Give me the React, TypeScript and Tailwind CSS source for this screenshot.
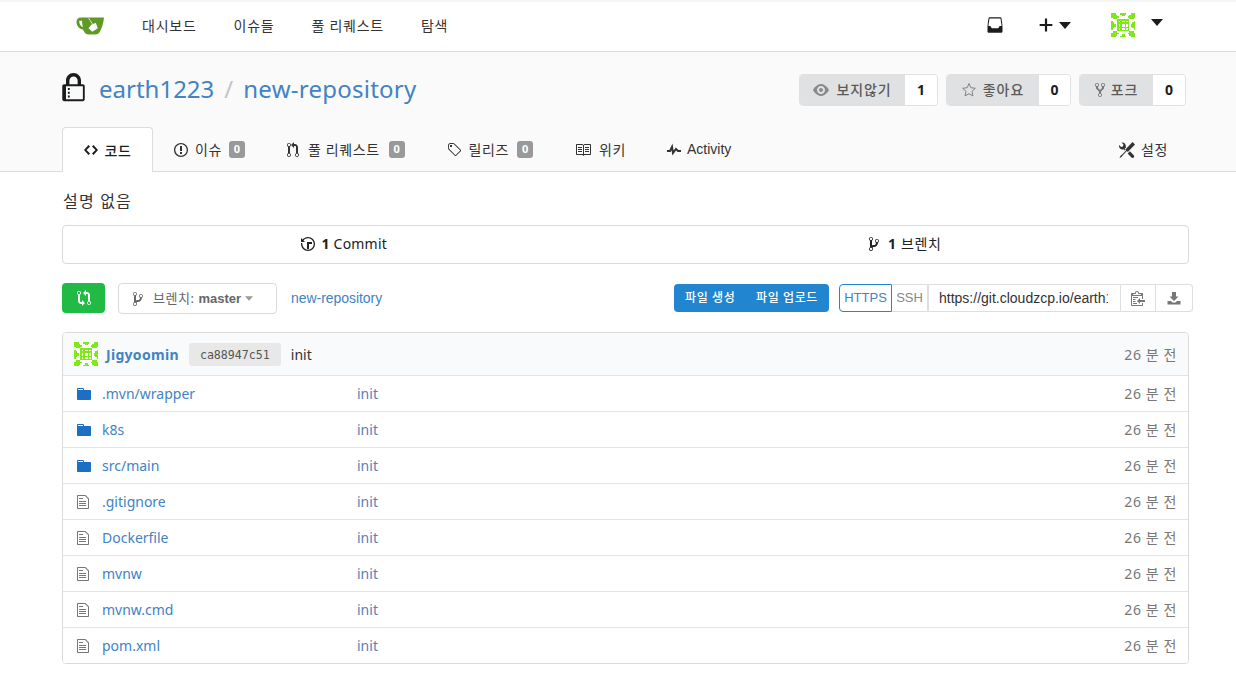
import type { ReactNode } from "react";

const KO = "font-['Noto_Sans','Noto_Sans_CJK_KR',sans-serif]";

function Oct({ w, d, className = "" }: { w: number; d: string; className?: string }) {
  return (
    <svg viewBox={`0 0 ${w} 16`} width={w} height={16} fill="currentColor" className={`shrink-0 ${className}`}>
      <path fillRule="evenodd" d={d} />
    </svg>
  );
}

const icons = {
  lock: "M4 13H3v-1h1v1zm8-6v7c0 .55-.45 1-1 1H1c-.55 0-1-.45-1-1V7c0-.55.45-1 1-1h1V4c0-2.2 1.8-4 4-4s4 1.8 4 4v2h1c.55 0 1 .45 1 1zM3.8 6h4.41V4c0-1.22-.98-2.2-2.2-2.2-1.22 0-2.2.98-2.2 2.2v2H3.8zM11 7H2v7h9V7zM4 8H3v1h1V8zm0 2H3v1h1v-1z",
  inbox: "M14 9l-1.13-7.14c-.08-.48-.5-.86-1-.86H2.13c-.5 0-.92.38-1 .86L0 9v5c0 .55.45 1 1 1h12c.55 0 1-.45 1-1V9zm-3.28.55l-.44.89c-.17.34-.52.56-.91.56H4.61c-.38 0-.72-.22-.89-.55l-.44-.91c-.17-.33-.52-.55-.89-.55H1l1-7h10l1 7h-1.38c-.39 0-.73.22-.91.55l.01.01z",
  eye: "M8.06 2C3 2 0 8 0 8s3 6 8.06 6C13 14 16 8 16 8s-3-6-7.94-6zM8 12c-2.2 0-4-1.78-4-4 0-2.2 1.8-4 4-4 2.22 0 4 1.8 4 4 0 2.22-1.78 4-4 4zm2-4c0 1.11-.89 2-2 2-1.11 0-2-.89-2-2 0-1.11.89-2 2-2 1.11 0 2 .89 2 2z",
  fork: "M8 1a1.993 1.993 0 0 0-1 3.72V6L5 8 3 6V4.72A1.993 1.993 0 0 0 2 1a1.993 1.993 0 0 0-1 3.72V6.5l3 3v1.78A1.993 1.993 0 0 0 5 15a1.993 1.993 0 0 0 1-3.72V9.5l3-3V4.72A1.993 1.993 0 0 0 8 1zM2 4.2C1.34 4.2.8 3.65.8 3c0-.65.55-1.2 1.2-1.2.65 0 1.2.55 1.2 1.2 0 .65-.55 1.2-1.2 1.2zm3 10c-.66 0-1.2-.55-1.2-1.2 0-.65.55-1.2 1.2-1.2.65 0 1.2.55 1.2 1.2 0 .65-.55 1.2-1.2 1.2zm3-10c-.66 0-1.2-.55-1.2-1.2 0-.65.55-1.2 1.2-1.2.65 0 1.2.55 1.2 1.2 0 .65-.55 1.2-1.2 1.2z",
  code: "M9.5 3L8 4.5 11.5 8 8 11.5 9.5 13 14 8 9.5 3zm-5 0L0 8l4.5 5L6 11.5 2.5 8 6 4.5 4.5 3z",
  issue: "M7 2.3c3.14 0 5.7 2.56 5.7 5.7s-2.56 5.7-5.7 5.7A5.71 5.71 0 0 1 1.3 8c0-3.14 2.56-5.7 5.7-5.7zM7 1C3.14 1 0 4.14 0 8s3.14 7 7 7 7-3.14 7-7-3.14-7-7-7zm1 3H6v5h2V4zm0 6H6v2h2v-2z",
  pr: "M11 11.28V5c-.03-.78-.34-1.47-.94-2.06C9.46 2.35 8.78 2.03 8 2H7V0L4 3l3 3V4h1c.27.02.48.11.69.31.21.2.3.42.31.69v6.28A1.993 1.993 0 0 0 10 15a1.993 1.993 0 0 0 1-3.72zm-1 2.92c-.66 0-1.2-.55-1.2-1.2 0-.65.55-1.2 1.2-1.2.65 0 1.2.55 1.2 1.2 0 .65-.55 1.2-1.2 1.2zM4 3c0-1.11-.89-2-2-2a1.993 1.993 0 0 0-1 3.72v6.56A1.993 1.993 0 0 0 2 15a1.993 1.993 0 0 0 1-3.72V4.72c.59-.34 1-.98 1-1.72zm-.8 10c0 .66-.55 1.2-1.2 1.2-.65 0-1.2-.55-1.2-1.2 0-.65.55-1.2 1.2-1.2.65 0 1.2.55 1.2 1.2zM2 4.2C1.34 4.2.8 3.65.8 3c0-.65.55-1.2 1.2-1.2.65 0 1.2.55 1.2 1.2 0 .65-.55 1.2-1.2 1.2z",
  tag: "M7.73 1.73C7.26 1.26 6.62 1 5.96 1H3.5C2.13 1 1 2.13 1 3.5v2.47c0 .66.27 1.3.73 1.77l6.06 6.06c.39.39 1.02.39 1.41 0l4.59-4.59a.996.996 0 0 0 0-1.41L7.73 1.73zM2.38 7.09c-.31-.3-.47-.7-.47-1.13V3.5c0-.88.72-1.59 1.59-1.59h2.47c.42 0 .83.16 1.13.47l6.14 6.13-4.73 4.73-6.13-6.15zM3.01 3h2v2H3V3h.01z",
  book: "M3 5h4v1H3V5zm0 3h4V7H3v1zm0 2h4V9H3v1zm11-5h-4v1h4V5zm0 2h-4v1h4V7zm0 2h-4v1h4V9zm2-6v9c0 .55-.45 1-1 1H9.5l-1 1-1-1H2c-.55 0-1-.45-1-1V3c0-.55.45-1 1-1h5.5l1 1 1-1H15c.55 0 1 .45 1 1zm-8 .5L7.5 3H2v9h6V3.5zm7-.5H9.5l-.5.5V12h6V3z",
  pulse: "M11.5 8L8.8 5.4 6.6 8.5 5.5 1.6 2.38 8H0v2h3.6l.9-1.8.9 5.4L9 8.5l1.6 1.5H14V8h-2.5z",
  tools: "M4.48 7.27c.26.26 1.28 1.33 1.28 1.33l.56-.58-.88-.91 1.69-1.8s-.76-.74-.43-.45c.32-1.19.03-2.51-.87-3.44C4.93.5 3.66.2 2.52.51l1.93 2-.51 1.96-1.89.52-1.93-2C-.19 4.17.1 5.48 1 6.4c.94.98 2.29 1.26 3.48.87zm6.44 1.94l-2.33 2.3 3.84 3.98c.31.33.73.49 1.14.49.41 0 .82-.16 1.14-.49.63-.65.63-1.7 0-2.35l-3.79-3.93zM16 2.53L13.55 0 6.33 7.46l.88.91-4.31 4.46-.99.53-1.39 2.27.35.37 2.2-1.44.51-1.02L7.9 9.08l.88.91L16 2.53z",
  history: "M8 13H6V6h5v2H8v5zM7 1C4.81 1 2.87 2.02 1.59 3.59L0 2v4h4L2.5 4.5C3.55 3.17 5.17 2.3 7 2.3c3.14 0 5.7 2.56 5.7 5.7s-2.56 5.7-5.7 5.7A5.71 5.71 0 0 1 1.3 8c0-.34.03-.67.09-1H.08C.03 7.33 0 7.66 0 8c0 3.86 3.14 7 7 7s7-3.14 7-7-3.14-7-7-7z",
  branch: "M10 5c0-1.11-.89-2-2-2a1.993 1.993 0 0 0-1 3.72v.3c-.02.52-.23.98-.63 1.38-.4.4-.86.61-1.38.63-.83.02-1.48.16-2 .45V4.72a1.993 1.993 0 0 0-1-3.72C.88 1 0 1.89 0 3a2 2 0 0 0 1 1.72v6.56c-.59.35-1 .99-1 1.72 0 1.11.89 2 2 2 1.11 0 2-.89 2-2 0-.53-.2-1-.53-1.36.09-.06.48-.41.59-.47.25-.11.56-.17.94-.17 1.05-.05 1.95-.45 2.75-1.25S8.95 7.77 9 6.73h-.02C9.59 6.37 10 5.73 10 5zM2 1.8c.66 0 1.2.55 1.2 1.2 0 .65-.55 1.2-1.2 1.2C1.35 4.2.8 3.65.8 3c0-.65.55-1.2 1.2-1.2zm0 12.41c-.66 0-1.2-.55-1.2-1.2 0-.65.55-1.2 1.2-1.2.65 0 1.2.55 1.2 1.2 0 .65-.55 1.2-1.2 1.2zm6-8c-.66 0-1.2-.55-1.2-1.2 0-.65.55-1.2 1.2-1.2.65 0 1.2.55 1.2 1.2 0 .65-.55 1.2-1.2 1.2z",
  dir: "M13 4H7V3c0-.66-.31-1-1-1H1c-.55 0-1 .45-1 1v10c0 .55.45 1 1 1h12c.55 0 1-.45 1-1V5c0-.55-.45-1-1-1zM6 4H1V3h5v1z",
  file: "M6 5H2V4h4v1zM2 8h7V7H2v1zm0 2h7V9H2v1zm0 2h7v-1H2v1zm10-7.5V14c0 .55-.45 1-1 1H1c-.55 0-1-.45-1-1V2c0-.55.45-1 1-1h7.5L12 4.5zM11 5L8 2H1v12h10V5z",
  clippy: "M2 13h4v1H2v-1zm5-6H2v1h5V7zm2 3V8l-3 3 3 3v-2h5v-2H9zM4.5 9H2v1h2.5V9zM2 12h2.5v-1H2v1zm9 1h1v2c-.02.28-.11.52-.3.7-.19.18-.42.28-.7.3H1c-.55 0-1-.45-1-1V4c0-.55.45-1 1-1h3c0-1.11.89-2 2-2 1.11 0 2 .89 2 2h3c.55 0 1 .45 1 1v5h-1V6H1v9h10v-2zM2 5h8c0-.55-.45-1-1-1H8c-.55 0-1-.45-1-1s-.45-1-1-1-1 .45-1 1-.45 1-1 1H3c-.55 0-1 .45-1 1z",
  compare: "M5 12H4c-.27-.02-.48-.11-.69-.31-.21-.2-.3-.42-.31-.69V4.72A1.993 1.993 0 0 0 2 1a1.993 1.993 0 0 0-1 3.72V11c.03.78.34 1.47.94 2.06.6.59 1.28.91 2.06.94h1v2l3-3-3-3v2zM2 1.8c.66 0 1.2.55 1.2 1.2 0 .65-.55 1.2-1.2 1.2C1.34 4.2.8 3.65.8 3c0-.65.55-1.2 1.2-1.2zm11 9.48V5c-.03-.78-.34-1.47-.94-2.06-.6-.59-1.28-.91-2.06-.94H9V0L6 3l3 3V4h1c.27.02.48.11.69.31.21.2.3.42.31.69v6.28A1.993 1.993 0 0 0 12 15a1.993 1.993 0 0 0 1-3.72zm-1 2.92c-.66 0-1.2-.55-1.2-1.2 0-.65.55-1.2 1.2-1.2.65 0 1.2.55 1.2 1.2 0 .65-.55 1.2-1.2 1.2z",
  plus: "M12 9H7v5H5V9H0V7h5V2h2v5h5v2z",
};

function Caret({ className = "" }: { className?: string }) {
  return (
    <svg viewBox="0 0 12 7" className={className} fill="currentColor">
      <path d="M0 0h12L6 7z" />
    </svg>
  );
}

function Logo() {
  return (
    <svg viewBox="0 0 28 18" width={28} height={18} className="mt-[2px] shrink-0">
      <path fill="#609926" d="M5 .5H28C27.500 6 26 11 24 14.500 23 16.500 21.500 17.500 19.500 17.500H13C10 17.500 8 15.500 7 12.500 3.500 12 .5 9 .5 5 .5 2 2 .5 5 .5z" />
      <path fill="#fff" d="M3.300 3.800H6C6 6 6.300 8 7 10 4.600 9.500 3 7 3.300 3.800z" />
      <path fill="none" stroke="#fff" strokeWidth={0.7} d="M12.500 1l4 6" />
      <path fill="#fff" d="M15.500 7.500L19.800 6l2 5.200-5.500 3.600-3.800-3.600z" />
    </svg>
  );
}

// identicon-style avatar, mirrored on both axes
function Avatar({ size }: { size: number }) {
  const rows = [
    "11100011",
    "11110001",
    "11111000",
    "01110000",
    "00001111",
    "10001010",
    "11001111",
    "11101010",
  ];
  const rects: ReactNode[] = [];
  rows.forEach((row, y) =>
    row.split("").forEach((c, x) => {
      if (c !== "1") return;
      [
        [x, y],
        [15 - x, y],
        [x, 15 - y],
        [15 - x, 15 - y],
      ].forEach(([rx, ry]) => rects.push(<rect key={`${rx}-${ry}`} x={rx} y={ry} width={1.02} height={1.02} />));
    })
  );
  return (
    <svg viewBox="0 0 16 16" width={size} height={size} fill="#7fe817" shapeRendering="crispEdges" className="shrink-0 bg-white">
      {rects}
    </svg>
  );
}

function CountButton({ icon, label, count, labelWidth, countWidth, gap }: { icon?: ReactNode; label: string; count: number; labelWidth: string; countWidth: string; gap: string }) {
  return (
    <div className="flex h-8 rounded-[4px] border border-[#e0e1e2] text-[14px]">
      <div className={`flex items-center justify-center rounded-l-[3px] bg-[#e0e1e2] font-medium tracking-[0.9px] text-[#5a5a5a] ${labelWidth} ${gap}`}>
        {icon}
        <span className="-mt-px">{label}</span>
      </div>
      <div className={`flex items-center justify-center rounded-r-[3px] bg-white font-bold tracking-normal text-[#1b1c1d] ${countWidth}`}>{count}</div>
    </div>
  );
}

function Tab({ icon, label, count, className = "" }: { icon: ReactNode; label: string; count?: number; className?: string }) {
  return (
    <div className={`flex items-center text-[14px] text-[#333] ${className}`}>
      {icon}
      <span>{label}</span>
      {count !== undefined && (
        <span className="flex h-[17px] w-4 items-center justify-center rounded-[3px] bg-[#999] text-[11px] font-bold tracking-normal text-white">{count}</span>
      )}
    </div>
  );
}

const files = [
  { name: ".mvn/wrapper", dir: true },
  { name: "k8s", dir: true },
  { name: "src/main", dir: true },
  { name: ".gitignore" },
  { name: "Dockerfile" },
  { name: "mvnw" },
  { name: "mvnw.cmd" },
  { name: "pom.xml" },
];

export default function App() {
  return (
    <div className={`h-[680px] w-[1236px] overflow-hidden bg-white text-[14px] text-[#212121] ${KO}`}>
      {/* Top nav */}
      <div className="h-[52px] border-t-2 border-b border-t-[#f5f5f5] border-b-[#dcdcdc] bg-white">
        <div className="flex h-[46px] items-center pl-[76px] pr-[73px]">
          <Logo />
          <div className="ml-[38px] flex gap-[37px] text-[14px] tracking-[0.75px] text-[#333]">
            <span>대시보드</span>
            <span>이슈들</span>
            <span>풀 리퀘스트</span>
            <span>탐색</span>
          </div>
          <div className="ml-auto flex items-center text-[#1b1c1d]">
            <Oct w={14} d={icons.inbox} className="scale-110" />
            <Oct w={12} d={icons.plus} className="ml-[38px] scale-110" />
            <Caret className="ml-[7px] h-[7px] w-3" />
            <div className="ml-[40px]">
              <Avatar size={24} />
            </div>
            <Caret className="mb-[6px] ml-[16px] h-[7px] w-3" />
          </div>
        </div>
      </div>

      {/* Repo header */}
      <div className="h-[120px] border-b border-[#dcdcdc] bg-[#fafafa]">
        <div className="flex h-[75px] items-center pl-[62px] pr-[50px]">
          <svg viewBox="0 0 12 16" width={23} height={30} fill="#1b1c1d" className="mb-[3px] shrink-0">
            <path fillRule="evenodd" d={icons.lock} />
          </svg>
          <div className="ml-[14px] flex -translate-y-px items-center text-[24px] text-[#4183c4]">
            <span>earth1223</span>
            <span className="mx-[10px] text-[#c2c4c7]">/</span>
            <span className="tracking-[0.25px]">new-repository</span>
          </div>
          <div className="ml-auto flex gap-2">
            <CountButton
              icon={<Oct w={16} d={icons.eye} className="text-[#8a8a8a]" />}
              label="보지않기"
              count={1}
              labelWidth="w-[105px]"
              countWidth="w-[32px]"
              gap="gap-[7px]"
            />
            <CountButton
              icon={
                <svg viewBox="0 0 14 16" width={14} height={16} fill="none" stroke="#777" strokeWidth={0.9}>
                  <path d="M13.300 6.300l-4.500-.6L7 1.500 5.200 5.700l-4.500.6L4 9.400l-.9 4.500L7 11.700l3.900 2.200-.9-4.500z" />
                </svg>
              }
              label="좋아요"
              count={0}
              labelWidth="w-[92px]"
              countWidth="w-[31px]"
              gap="gap-[7px]"
            />
            <CountButton
              icon={<Oct w={10} d={icons.fork} className="text-[#777]" />}
              label="포크"
              count={0}
              labelWidth="w-[73px]"
              countWidth="w-[32px]"
              gap="gap-[6px]"
            />
          </div>
        </div>
        <div className="flex h-[44px] items-start pl-[62px] pr-[68px] tracking-[0.6px]">
          <div className="z-10 flex h-[45px] w-[91px] items-center justify-center gap-[7px] rounded-t-[4px] border border-b-0 border-[#dcdcdc] bg-white text-[14px] font-medium text-[#1b1c1d]">
            <Oct w={14} d={icons.code} />
            <span>코드</span>
          </div>
          <div className="flex h-[45px] items-center">
            <Tab className="ml-[21px] gap-[7px]" icon={<Oct w={14} d={icons.issue} />} label="이슈" count={0} />
            <Tab className="ml-[42px] gap-[9px]" icon={<Oct w={12} d={icons.pr} />} label="풀 리퀘스트" count={0} />
            <Tab className="ml-[42px] gap-[8px]" icon={<Oct w={14} d={icons.tag} />} label="릴리즈" count={0} />
            <Tab className="ml-[42px] gap-[8px]" icon={<Oct w={16} d={icons.book} />} label="위키" />
            <Tab className="ml-[41px] gap-[6px] font-['Liberation_Sans',sans-serif] tracking-normal" icon={<Oct w={14} d={icons.pulse} />} label="Activity" />
          </div>
          <div className="ml-auto flex h-[45px] items-center">
            <Tab className="gap-[6px]" icon={<Oct w={16} d={icons.tools} />} label="설정" />
          </div>
        </div>
      </div>

      {/* Content */}
      <div className="pl-[62px] pr-[43px]">
        <div className="mt-[17px] h-[24px] pl-px text-[16px] leading-[24px] tracking-[1.2px] text-[#333]">설명 없음</div>

        <div className="mt-[12px] flex h-[39px] w-[1127px] items-center rounded-[4px] border border-[#d9dadb] bg-white pb-[2px]">
          <div className="flex flex-1 items-center justify-center gap-[7px] text-[14px] tracking-[0.2px] text-[#212121]">
            <Oct w={14} d={icons.history} />
            <span>
              <b>1</b> Commit
            </span>
          </div>
          <div className="flex flex-1 items-center justify-center gap-[9px] pr-[2px] text-[14px] tracking-[0.6px] text-[#212121]">
            <Oct w={10} d={icons.branch} />
            <span>
              <b>1</b> 브렌치
            </span>
          </div>
        </div>

        {/* Toolbar */}
        <div className="mt-[19px] flex h-[31px] items-start">
          <div className="flex h-[30px] w-[43px] items-center justify-center rounded-[4px] bg-[#21ba45] text-white">
            <Oct w={14} d={icons.compare} />
          </div>
          <div className="ml-[13px] flex h-[31px] w-[159px] items-center rounded-[4px] border border-[#d9dadb] bg-white pl-[14px] text-[13px] text-[#666]">
            <Oct w={10} d={icons.branch} />
            <span className="ml-[10px] tracking-[0.5px]">브렌치:</span>
            <b className="ml-1 font-['Liberation_Sans',sans-serif] font-bold">master</b>
            <Caret className="ml-[4px] h-[5px] w-[8px] text-[#999]" />
          </div>
          <span className="ml-[14px] mt-[5px] font-['Liberation_Sans',sans-serif] text-[14px] -tracking-[0.05px] text-[#4183c4]">new-repository</span>

          <div className="ml-auto mt-px flex h-[28px] w-[155px] items-center justify-between rounded-[4px] bg-[#2185d0] px-[11px] text-[12px] font-medium tracking-[0.6px] text-white">
            <span>파일 생성</span>
            <span>파일 업로드</span>
          </div>
          <div className="ml-[10px] mt-px flex h-[28px] items-stretch text-[13px]">
            <div className="flex w-[53px] items-center justify-center rounded-l-[4px] border border-[#2185d0] bg-white font-['Liberation_Sans',sans-serif] text-[#4183c4]">HTTPS</div>
            <div className="flex w-[36px] items-center justify-center border-y border-r border-[#dedede] bg-white font-['Liberation_Sans',sans-serif] text-[#888]">SSH</div>
            <input
              readOnly
              value="https://git.cloudzcp.io/earth1223/new-repository.git"
              className="w-[192px] border-y border-l border-[#dedede] bg-white pl-[10px] pr-[12px] font-['Liberation_Sans',sans-serif] text-[14px] text-[#333] outline-none"
            />
            <div className="flex w-[36px] items-center justify-center border border-[#dedede] bg-white text-[#777]">
              <Oct w={14} d={icons.clippy} />
            </div>
            <div className="flex w-[37px] items-center justify-center rounded-r-[4px] border-y border-r border-[#dedede] bg-white text-[#777]">
              <svg viewBox="0 0 14 14" width={14} height={14} fill="currentColor">
                <path d="M5 1h4v4.500h2.500L7 10 2.500 5.500H5zM0.500 10h3.500l1.500 1.500h3L10 10h3.500v3.500H.5z" />
              </svg>
            </div>
          </div>
        </div>

        {/* File table */}
        <div className="mt-[18px] w-[1127px] overflow-hidden rounded-[4px] border border-[#d9dadb]">
          <div className="flex h-[42px] items-center bg-[#f9fafb] pl-[11px] pr-[11px]">
            <Avatar size={24} />
            <span className="ml-[8px] text-[14px] font-bold tracking-[0.3px] text-[#4183c4]">Jigyoomin</span>
            <span className="ml-[10px] flex h-[23px] w-[92px] items-center justify-center rounded-[3px] bg-[#e8e8e8] pt-[3px] font-['DejaVu_Sans_Mono',monospace] text-[11.6px] text-[#555]">ca88947c51</span>
            <span className="ml-[10px] text-[14px] text-[#333]">init</span>
            <span className="ml-auto text-[14px] tracking-[0.6px] text-[#777]">26 분 전</span>
          </div>
          {files.map((file) => (
            <div key={file.name} className="flex h-[36px] items-center border-t border-[#e4e4e4] bg-white pl-[14px] pr-[11px]">
              <span className={`flex w-[25px] items-center ${file.dir ? "text-[#1c6fc2]" : "text-[#777]"}`}>
                <Oct w={file.dir ? 14 : 12} d={file.dir ? icons.dir : icons.file} />
              </span>
              <span className="w-[255px] text-[14px] text-[#4183c4]">{file.name}</span>
              <span className="text-[14px] text-[#5b7fb8]">init</span>
              <span className="ml-auto text-[14px] tracking-[0.6px] text-[#777]">26 분 전</span>
            </div>
          ))}
        </div>
      </div>
    </div>
  );
}
